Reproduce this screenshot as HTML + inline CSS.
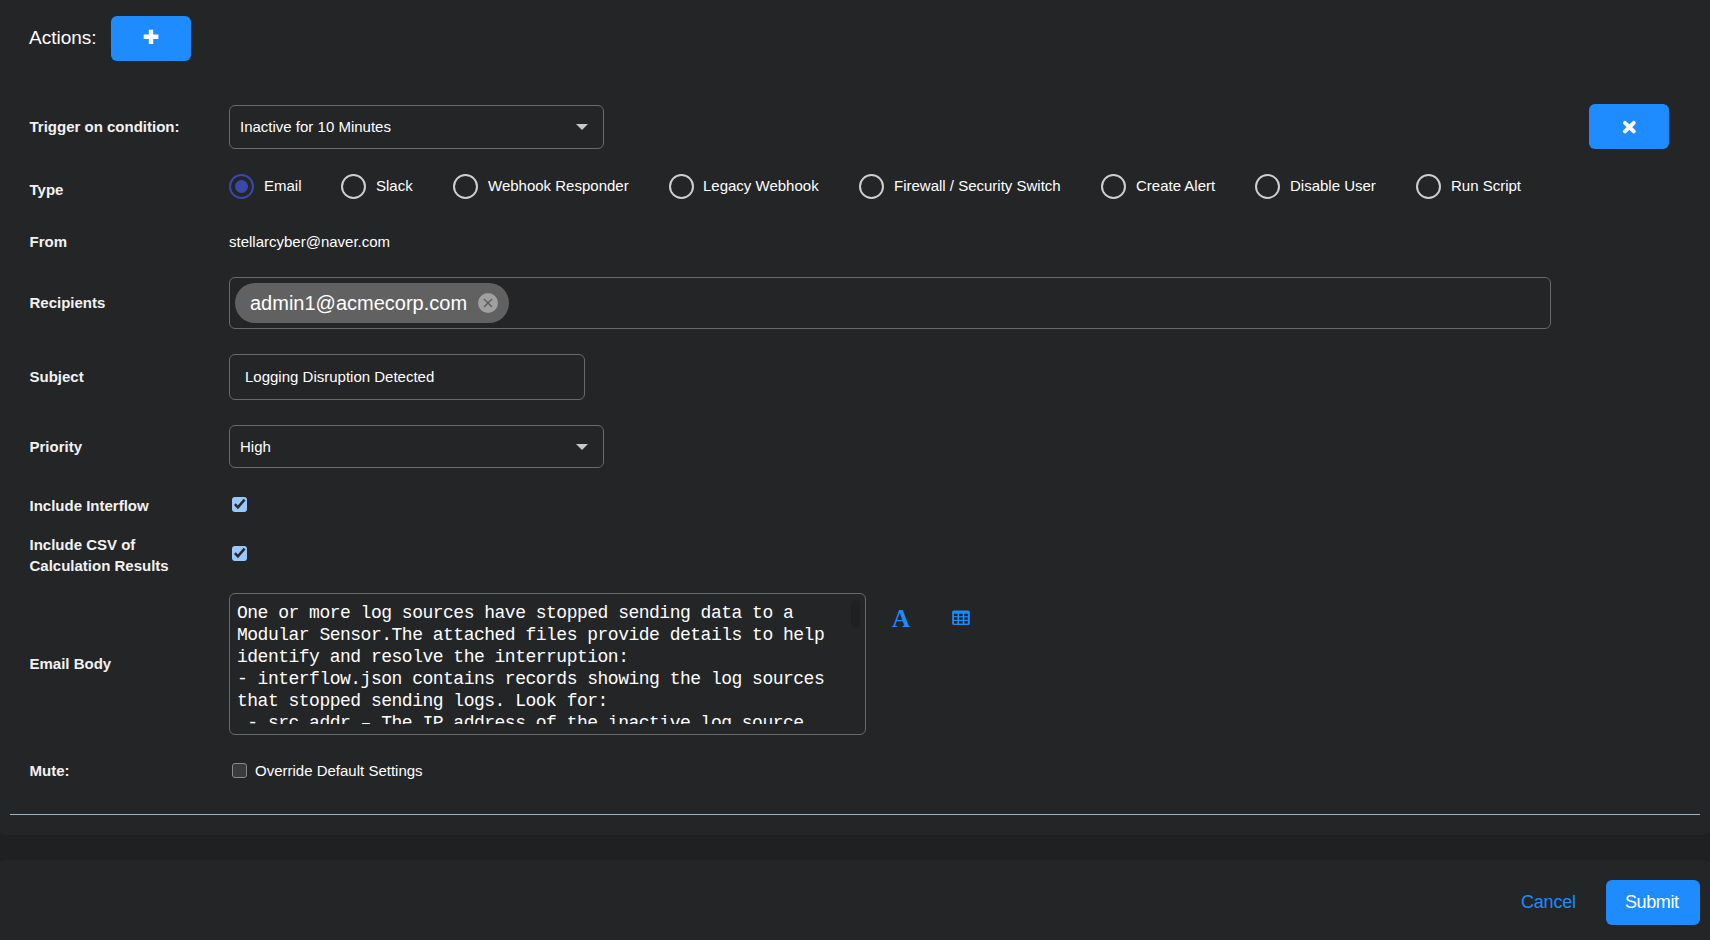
<!DOCTYPE html>
<html><head><meta charset="utf-8">
<style>
html,body{margin:0;padding:0;}
body{width:1710px;height:940px;overflow:hidden;background:#1f2022;position:relative;font-family:"Liberation Sans",sans-serif;color:#fff;}
.panel{position:absolute;background:#242527;}
#main{left:-4px;top:-20px;width:1718px;height:855px;border-radius:10px;}
#foot{left:-4px;top:860px;width:1718px;height:100px;border-radius:10px;}
.a{position:absolute;white-space:nowrap;}
.lbl{font-weight:bold;font-size:15px;line-height:20px;left:29.5px;color:#f2f2f2;}
.txt{font-size:15px;line-height:20px;color:#fff;}
.btn{position:absolute;background:#1e8cff;border-radius:6px;}
.box{position:absolute;border:1px solid #66696d;border-radius:6px;box-sizing:border-box;}
.radio{position:absolute;top:174px;width:25px;height:25px;box-sizing:border-box;border:2.4px solid #cfcfcf;border-radius:50%;}
.radio.on{border-color:#3949ab;}
.radio.on::after{content:"";position:absolute;left:3.6px;top:3.6px;width:13px;height:13px;border-radius:50%;background:#3949ab;}
.caret{position:absolute;width:0;height:0;border-left:6px solid transparent;border-right:6px solid transparent;border-top:6px solid #c8c8c8;}
.cb{position:absolute;width:15px;height:15px;border-radius:3px;box-sizing:border-box;}
.cb.on{background:#99c8ff;}
.cb.off{background:#3b3b3b;border:1.3px solid #8a8a8a;}
.mono{font-family:"Liberation Mono",monospace;font-size:18px;line-height:22px;letter-spacing:-0.5px;color:#fff;white-space:pre;}
</style></head>
<body>
<div class="panel" id="main"></div>
<div class="panel" id="foot"></div>

<!-- Actions -->
<div class="a" style="left:29px;top:28px;font-size:19px;line-height:20px;color:#fff;">Actions:</div>
<div class="btn" style="left:111px;top:16px;width:80px;height:45px;">
  <svg width="80" height="45" style="position:absolute;left:0;top:0"><path d="M40 13.7 V27.9 M32.7 20.8 H47.4" stroke="#fff" stroke-width="4.4" fill="none"/></svg>
</div>

<!-- Trigger -->
<div class="a lbl" style="top:117px;">Trigger on condition:</div>
<div class="box" style="left:229px;top:105px;width:375px;height:44px;"></div>
<div class="a txt" style="left:240px;top:117px;">Inactive for 10 Minutes</div>
<div class="caret" style="left:576px;top:124px;"></div>
<div class="btn" style="left:1589px;top:104px;width:80px;height:45px;">
  <svg width="80" height="45" style="position:absolute;left:0;top:0"><path d="M36 18.8 L44.8 27.4 M44.8 18.8 L36 27.4" stroke="#fff" stroke-width="3.9" stroke-linecap="round" fill="none"/></svg>
</div>

<!-- Type -->
<div class="a lbl" style="top:180px;">Type</div>
<div class="radio on" style="left:229px;"></div><div class="a txt" style="left:264px;top:176px;">Email</div>
<div class="radio" style="left:341px;"></div><div class="a txt" style="left:376px;top:176px;">Slack</div>
<div class="radio" style="left:453px;"></div><div class="a txt" style="left:488px;top:176px;">Webhook Responder</div>
<div class="radio" style="left:669px;"></div><div class="a txt" style="left:703px;top:176px;">Legacy Webhook</div>
<div class="radio" style="left:859px;"></div><div class="a txt" style="left:894px;top:176px;">Firewall / Security Switch</div>
<div class="radio" style="left:1101px;"></div><div class="a txt" style="left:1136px;top:176px;">Create Alert</div>
<div class="radio" style="left:1255px;"></div><div class="a txt" style="left:1290px;top:176px;">Disable User</div>
<div class="radio" style="left:1416px;"></div><div class="a txt" style="left:1451px;top:176px;">Run Script</div>

<!-- From -->
<div class="a lbl" style="top:232px;">From</div>
<div class="a txt" style="left:229px;top:232px;">stellarcyber@naver.com</div>

<!-- Recipients -->
<div class="a lbl" style="top:293px;">Recipients</div>
<div class="box" style="left:229px;top:277px;width:1322px;height:52px;"></div>
<div style="position:absolute;left:235px;top:283px;width:274px;height:40px;border-radius:20px;background:#616161;"></div>
<div class="a" style="left:250px;top:293px;font-size:20px;line-height:20px;color:#fff;">admin1@acmecorp.com</div>
<svg style="position:absolute;left:478px;top:292.5px" width="20" height="20"><circle cx="10" cy="10" r="10" fill="#a0a0a0"/><path d="M6 6 L14 14 M14 6 L6 14" stroke="#5a5a5a" stroke-width="1.4"/></svg>

<!-- Subject -->
<div class="a lbl" style="top:367px;">Subject</div>
<div class="box" style="left:229px;top:354px;width:356px;height:46px;"></div>
<div class="a txt" style="left:245px;top:367px;">Logging Disruption Detected</div>

<!-- Priority -->
<div class="a lbl" style="top:437px;">Priority</div>
<div class="box" style="left:229px;top:425px;width:375px;height:43px;"></div>
<div class="a txt" style="left:240px;top:437px;">High</div>
<div class="caret" style="left:576px;top:444px;"></div>

<!-- Include Interflow -->
<div class="a lbl" style="top:496px;">Include Interflow</div>
<div class="cb on" style="left:232px;top:497px;"><svg width="15" height="15" style="position:absolute;left:0;top:0"><path d="M2.9 7.2 L5.9 10.4 L12.6 2.6" stroke="#2a2a2a" stroke-width="2.5" fill="none"/></svg></div>

<div class="a lbl" style="top:534px;line-height:21px;">Include CSV of<br>Calculation Results</div>
<div class="cb on" style="left:232px;top:546px;"><svg width="15" height="15" style="position:absolute;left:0;top:0"><path d="M2.9 7.2 L5.9 10.4 L12.6 2.6" stroke="#2a2a2a" stroke-width="2.5" fill="none"/></svg></div>

<!-- Email body -->
<div class="a lbl" style="top:654px;">Email Body</div>
<div class="box" style="left:229px;top:593px;width:637px;height:142px;"></div>
<div style="position:absolute;left:237px;top:600px;width:610px;height:124px;overflow:hidden;">
<div class="mono" style="margin-top:2px">One or more log sources have stopped sending data to a
Modular Sensor.The attached files provide details to help
identify and resolve the interruption:
- interflow.json contains records showing the log sources
that stopped sending logs. Look for:
 - src_addr – The IP address of the inactive log source</div>
</div>
<div style="position:absolute;left:850.5px;top:599.5px;width:9px;height:28px;border-radius:4.5px;background:#1f2022;"></div>
<div class="a" style="left:892px;top:604px;font-family:'Liberation Serif',serif;font-weight:bold;font-size:25px;line-height:30px;color:#1e8cff;">A</div>
<svg style="position:absolute;left:952px;top:610px" width="18" height="16" viewBox="0 -0.5 18 16"><rect x="0.2" y="0.1" width="17.6" height="14.4" rx="1.6" fill="#1e8cff"/>
<g fill="#242527"><rect x="2" y="3.2" width="3.5" height="2.5"/><rect x="7.1" y="3.2" width="3.6" height="2.5"/><rect x="12.3" y="3.2" width="3.5" height="2.5"/>
<rect x="2" y="6.8" width="3.5" height="2.5"/><rect x="7.1" y="6.8" width="3.6" height="2.5"/><rect x="12.3" y="6.8" width="3.5" height="2.5"/>
<rect x="2" y="10.5" width="3.5" height="2.6"/><rect x="7.1" y="10.5" width="3.6" height="2.6"/><rect x="12.3" y="10.5" width="3.5" height="2.6"/></g></svg>

<!-- Mute -->
<div class="a lbl" style="top:761px;">Mute:</div>
<div class="cb off" style="left:232px;top:763px;"></div>
<div class="a txt" style="left:255px;top:761px;">Override Default Settings</div>

<div style="position:absolute;left:10px;top:814px;width:1690px;height:1px;background:#9cb2c6;"></div>

<!-- Footer -->
<div class="a" style="left:1521px;top:892px;font-size:18px;line-height:20px;color:#1e8cff;letter-spacing:-0.2px;">Cancel</div>
<div class="btn" style="left:1606px;top:880px;width:94px;height:45px;"></div>
<div class="a" style="left:1625px;top:892px;font-size:18px;line-height:20px;color:#fff;letter-spacing:-0.4px;">Submit</div>
</body></html>
